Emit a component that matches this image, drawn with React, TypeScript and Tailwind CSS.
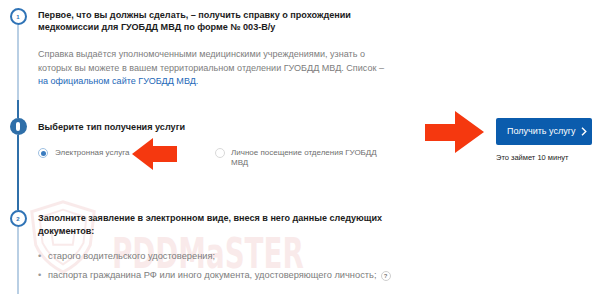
import React from "react";

const LIGHT = "bg-[#b9cfe4]";
const DARK = "bg-[#2f6fa9]";

function LeftArrow() {
  return (
    <svg width="46" height="32" viewBox="0 0 46 32" className="absolute left-[132px] top-[138px]">
      <polygon points="0,16 21,0 21,8 45,8 45,24 21,24 21,32" fill="#f5380f" />
    </svg>
  );
}

function RightArrow() {
  return (
    <svg width="60" height="42" viewBox="0 0 60 42" className="absolute left-[425px] top-[111px]">
      <polygon points="59,21 30,0 30,13 0,13 0,30 30,30 30,42" fill="#f5380f" />
    </svg>
  );
}

function Watermark() {
  return (
    <div className="absolute left-[24px] top-[198px] w-[260px] h-[80px] pointer-events-none opacity-[0.1]">
      <svg width="78" height="78" viewBox="0 0 80 80" className="absolute left-0 top-0">
        <path d="M8 14 L40 4 L72 14 L68 48 Q60 66 40 76 Q20 66 12 48 Z" fill="none" stroke="#c83a3a" strokeWidth="3" />
        <path d="M16 20 L40 12 L64 20 L61 46 Q54 60 40 68 Q26 60 19 46 Z" fill="none" stroke="#c83a3a" strokeWidth="2" />
        <path d="M28 34 L52 34 L50 48 L30 48 Z" fill="none" stroke="#c83a3a" strokeWidth="2" />
      </svg>
      <div
        className="absolute left-[88px] top-[36px] origin-left scale-x-[0.66] text-[42px] leading-[40px] font-bold text-[#c83a3a] whitespace-nowrap"
        style={{ fontFamily: '"DejaVu Sans", sans-serif' }}
      >
        PDDMaSTER
      </div>
    </div>
  );
}

export default function App() {
  return (
    <div
      className="relative w-[600px] h-[294px] overflow-hidden bg-white text-[#1b1b1b]"
      style={{ fontFamily: '"Liberation Sans", Arial, sans-serif' }}
    >
      <Watermark />

      {/* Step 1 */}
      <div className="relative flex h-[100px]">
        <div className="w-[36px] flex flex-col items-center">
          <div className="mt-[8px] w-[17px] h-[17px] rounded-full border-[2px] border-[#2f73b6] bg-white flex items-center justify-center text-[6px] font-bold text-[#2f73b6] leading-none">
            1
          </div>
          <div className={`w-[2px] flex-1 ${LIGHT}`} />
        </div>
        <div className="pl-[2px] pt-[9px]">
          <div className="text-[9.1px] font-bold leading-[12px] whitespace-nowrap">
            Первое, что вы должны сделать, – получить справку о прохождении
            <br />
            медкомиссии для ГУОБДД МВД по форме № 003-В/у
          </div>
          <div className="mt-[15px] text-[9.05px] leading-[13.5px] text-[#7d7d7d] whitespace-nowrap">
            Справка выдаётся уполномоченными медицинскими учреждениями, узнать о
            <br />
            которых вы можете в вашем территориальном отделении ГУОБДД МВД. Список –
            <br />
            <span className="text-[#2468b8]">на официальном сайте ГУОБДД МВД.</span>
          </div>
        </div>
      </div>

      {/* Active step */}
      <div className="relative flex h-[110px]">
        <div className="w-[36px] flex flex-col items-center">
          <div className={`w-[2px] h-[18px] ${DARK}`} />
          <div className={`w-[17px] h-[17px] rounded-full ${DARK} flex items-center justify-center`}>
            <div className="w-[4px] h-[9px] rounded-full bg-white" />
          </div>
          <div className={`w-[2px] flex-1 ${DARK}`} />
        </div>
        <div className="pl-[2px] flex flex-1">
          <div className="flex-1 pt-[21px]">
            <div className="text-[9.1px] font-bold leading-[12px] whitespace-nowrap">
              Выберите тип получения услуги
            </div>
            <div className="mt-[15px] flex items-start">
              <div className="w-[177px] flex items-start">
                <div className="w-[10px] h-[10px] rounded-full border border-[#9ec0e2] flex items-center justify-center">
                  <div className="w-[5px] h-[5px] rounded-full bg-[#3a7cc0]" />
                </div>
                <div className="ml-[7px] text-[8px] leading-[10px] text-[#6f6f6f] whitespace-nowrap">
                  Электронная услуга
                </div>
              </div>
              <div className="flex items-start">
                <div className="w-[10px] h-[10px] rounded-full border border-[#d9d9d9]" />
                <div className="ml-[6px] w-[150px] text-[8px] leading-[10px] text-[#6f6f6f]">
                  Личное посещение отделения ГУОБДД
                  <br />
                  МВД
                </div>
              </div>
            </div>
          </div>
          <div className="w-[104px] pt-[18px]">
            <div className="w-[96px] h-[27px] rounded-[2px] bg-[#0b5cad] flex items-center pl-[11px] text-white text-[9px] whitespace-nowrap">
              Получить услугу
              <svg width="6" height="9" viewBox="0 0 6 9" className="ml-[5px]">
                <path d="M1 0.8 L4.8 4.5 L1 8.2" fill="none" stroke="white" strokeWidth="1.4" />
              </svg>
            </div>
            <div className="mt-[8px] text-[7.5px] leading-[10px] text-[#222] whitespace-nowrap">
              Это займет 10 минут
            </div>
          </div>
        </div>
      </div>

      {/* Step 2 */}
      <div className="relative flex h-[84px]">
        <div className="w-[36px] flex flex-col items-center">
          <div className="w-[17px] h-[17px] rounded-full border-[2px] border-[#2f73b6] bg-white flex items-center justify-center text-[6px] font-bold text-[#2f73b6] leading-none">
            2
          </div>
          <div className={`w-[2px] flex-1 ${LIGHT}`} />
        </div>
        <div className="pl-[2px] pt-[2px]">
          <div className="text-[9.05px] font-bold leading-[12.5px] whitespace-nowrap">
            Заполните заявление в электронном виде, внеся в него данные следующих
            <br />
            документов:
          </div>
          <div className="mt-[10px] text-[9.3px] leading-[19px] text-[#7d7d7d]">
            <div className="flex items-center whitespace-nowrap">
              <span className="w-[10px] text-[#999]">•</span>
              старого водительского удостоверения;
            </div>
            <div className="flex items-center whitespace-nowrap">
              <span className="w-[10px] text-[#999]">•</span>
              паспорта гражданина РФ или иного документа, удостоверяющего личность;
              <span className="ml-[4px] w-[10px] h-[10px] rounded-full border border-[#cfcfcf] flex items-center justify-center text-[6px] leading-none font-bold text-[#777]">
                ?
              </span>
            </div>
          </div>
        </div>
      </div>

      <LeftArrow />
      <RightArrow />
    </div>
  );
}
